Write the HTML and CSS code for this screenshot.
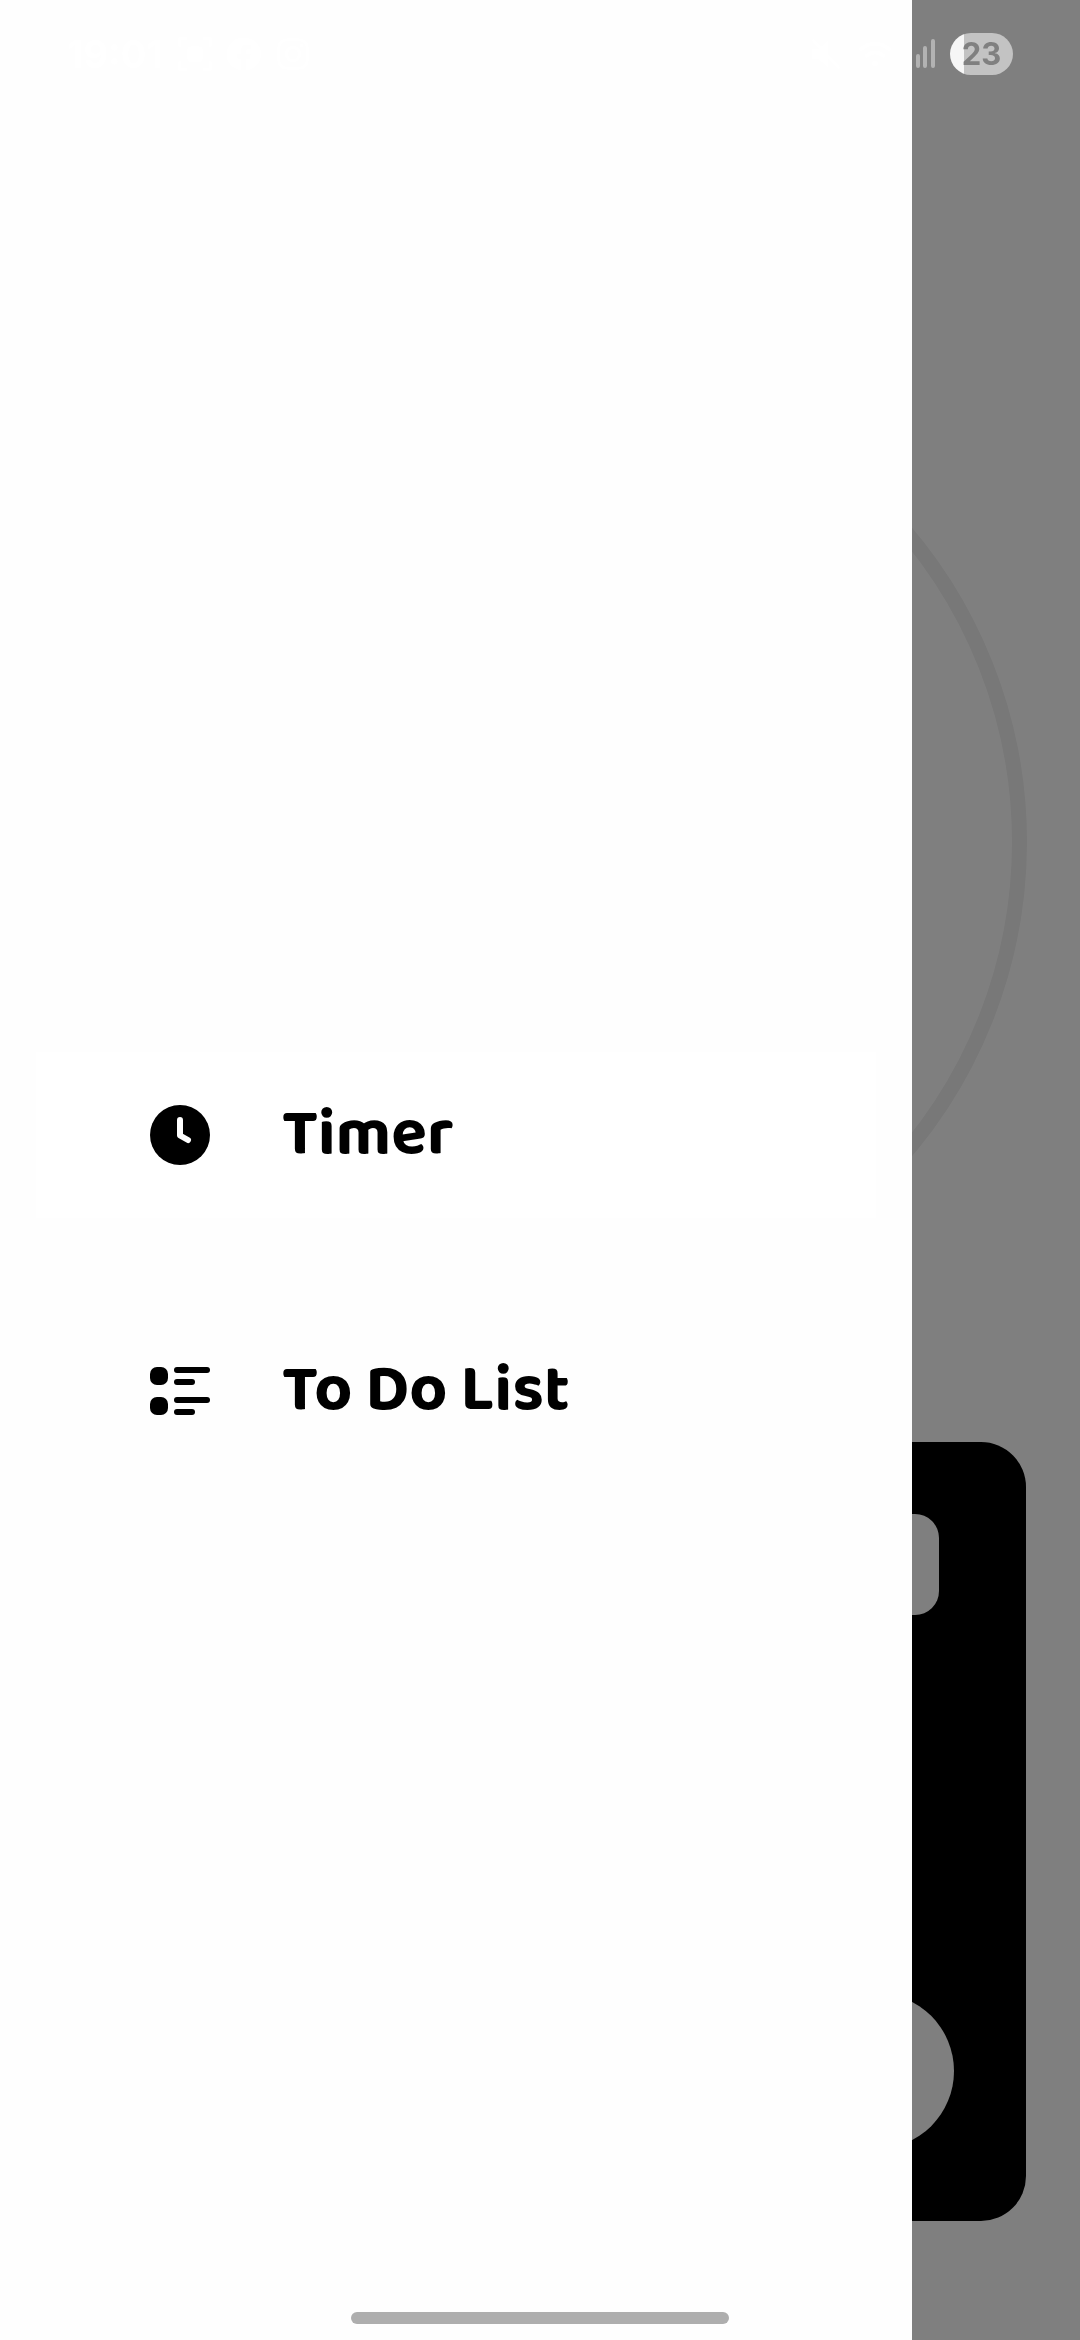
FILE: index.html
```html
<!DOCTYPE html>
<html lang="en">
<head>
  <meta charset="utf-8">
  <meta name="viewport" content="width=device-width, initial-scale=1">
  <title>Timer</title>
  <link rel="stylesheet" href="styles.css">
</head>
<body>
  <main class="screen" inert>
    <div class="dial"></div>
    <section class="panel">
      <button class="panel-chip" type="button" aria-label="Edit"></button>
      <button class="panel-round" type="button" aria-label="Skip"></button>
    </section>
  </main>
  <div class="scrim"></div>

  <nav class="drawer">
    <a class="drawer-item is-active" href="#timer">
      <svg class="icon" viewBox="0 0 60 60" aria-hidden="true">
        <circle cx="30" cy="30" r="30"/>
        <path d="M30 15v15.500l8 4.500" fill="none" stroke="#fff" stroke-width="6" stroke-linecap="round" stroke-linejoin="round"/>
      </svg>
      <span>Timer</span>
    </a>
    <a class="drawer-item" href="#todo">
      <svg class="icon" viewBox="0 0 60 60" aria-hidden="true">
        <rect x="0" y="6" width="18" height="18" rx="7"/>
        <rect x="24" y="6" width="36" height="6" rx="3"/>
        <rect x="24" y="18" width="21" height="6" rx="3"/>
        <rect x="0" y="36" width="18" height="18" rx="7"/>
        <rect x="24" y="36" width="36" height="6" rx="3"/>
        <rect x="24" y="48" width="21" height="6" rx="3"/>
      </svg>
      <span>To Do List</span>
    </a>
  </nav>

  <header class="status">
    <time class="clock">19:01</time>
    <svg class="note-icon" viewBox="0 0 36 36" aria-hidden="true">
      <path d="M2 10V2h8M26 2h8v8M34 26v8h-8M10 34H2v-8" fill="none" stroke="currentColor" stroke-width="3"/>
      <rect x="10" y="10" width="16" height="16" rx="3" fill="currentColor"/>
    </svg>
    <svg class="note-icon" viewBox="0 0 36 36" aria-hidden="true">
      <path fill="currentColor" d="M18 1a17 17 0 0 0-3 34V23h-4v-5h4v-4c0-4 2-6 6-6h4v5h-3c-2 0-2 1-2 2v3h5l-1 5h-4v12A17 17 0 0 0 18 1z"/>
    </svg>
    <svg class="note-icon" viewBox="0 0 36 36" aria-hidden="true">
      <g fill="none" stroke="currentColor" stroke-width="3">
        <rect x="3" y="3" width="30" height="30" rx="8"/>
        <circle cx="18" cy="18" r="7"/>
      </g>
      <circle cx="27" cy="9" r="2" fill="currentColor"/>
    </svg>
    <span class="spacer"></span>
    <svg class="note-icon" viewBox="0 0 36 36" aria-hidden="true">
      <path fill="currentColor" d="M3 13h7l10-9v28l-10-9H3z"/>
      <path d="M5 4l26 28" stroke="currentColor" stroke-width="3" stroke-linecap="round"/>
    </svg>
    <svg class="note-icon" viewBox="0 0 36 36" aria-hidden="true">
      <path d="M3 13c9-8 21-8 30 0M9 20c6-5 12-5 18 0" fill="none" stroke="currentColor" stroke-width="4" stroke-linecap="round"/>
      <circle cx="18" cy="28" r="3" fill="currentColor"/>
    </svg>
    <svg class="signal" viewBox="0 0 28 30" aria-hidden="true">
      <path d="M3 27v-3M11 27v-10M18 27v-18M26 27v-25" fill="none" stroke="currentColor" stroke-width="4" stroke-linecap="round"/>
    </svg>
    <span class="battery">23</span>
  </header>
  <div class="home-bar"></div>
</body>
</html>
```
FILE: styles.css
```css
* {
  box-sizing: border-box;
}

body {
  margin: 0;
  min-height: 100vh;
  background: #fff;
  color: #000;
  font-family: "Baloo 2", Lato, sans-serif;
}

button {
  border: 0;
  padding: 0;
  background: #fff;
}

.screen {
  display: flex;
  flex-direction: column;
  justify-content: space-between;
  min-height: 100vh;
  padding: 355px 54px 119px;
}

.dial {
  aspect-ratio: 1;
  margin: 0 -1px;
  border: 15px solid #f0f0f0;
  border-radius: 50%;
}

.panel {
  display: flex;
  flex-direction: column;
  justify-content: space-between;
  align-items: flex-end;
  height: 779px;
  padding: 72px;
  border-radius: 45px;
  background: #000;
}

.panel-chip {
  width: 240px;
  height: 101px;
  margin-right: 15px;
  border-radius: 24px;
}

.panel-round {
  width: 156px;
  height: 156px;
  border-radius: 50%;
}

.scrim {
  position: fixed;
  inset: 0;
  background: rgba(0, 0, 0, 0.5);
}

.drawer {
  position: fixed;
  inset: 0 168px 0 0;
  display: flex;
  flex-direction: column;
  justify-content: center;
  gap: 90px;
  padding: 186px 36px 0;
  background: #fefefe;
}

.drawer-item {
  display: flex;
  align-items: center;
  gap: 72px;
  height: 166px;
  padding: 0 114px;
  color: #000;
  font-size: 66px;
  font-weight: 700;
  line-height: 72px;
  text-decoration: none;
}

.is-active {
  background: #fff;
}

.icon {
  width: 60px;
  height: 60px;
}

.status {
  position: fixed;
  inset: 0 0 auto;
  display: flex;
  align-items: center;
  gap: 15px;
  height: 108px;
  padding: 0 67px;
  color: #fff;
  font-family: Inter, sans-serif;
  font-weight: 700;
}

.clock {
  font-size: 38px;
}

.spacer {
  flex: 1;
}

.note-icon {
  width: 34px;
  height: 34px;
}

.signal {
  width: 28px;
  height: 30px;
  opacity: 0.4;
}

.battery {
  width: 63px;
  height: 42px;
  border-radius: 21px;
  background: linear-gradient(90deg, #f6f6f6 14px, #c3c3c3 14px);
  color: #808080;
  font-size: 31px;
  line-height: 42px;
  text-align: center;
}

.home-bar {
  position: fixed;
  inset: auto 0 16px;
  width: 35%;
  height: 12px;
  margin: 0 auto;
  border-radius: 6px;
  background: #aeaeae;
}
```
